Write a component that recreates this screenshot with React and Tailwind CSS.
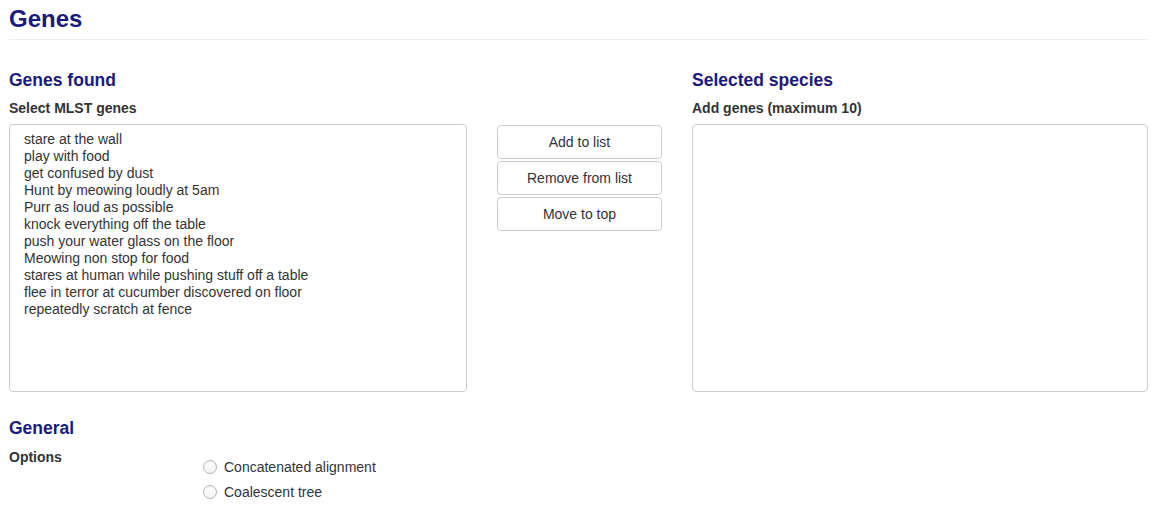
import React from "react";

const genes = [
  "stare at the wall",
  "play with food",
  "get confused by dust",
  "Hunt by meowing loudly at 5am",
  "Purr as loud as possible",
  "knock everything off the table",
  "push your water glass on the floor",
  "Meowing non stop for food",
  "stares at human while pushing stuff off a table",
  "flee in terror at cucumber discovered on floor",
  "repeatedly scratch at fence",
];

function Radio({ label }) {
  return (
    <label className="flex items-center h-[25px]">
      <span className="w-[14px] h-[14px] rounded-full border border-[#b4b4b4] bg-gradient-to-b from-white to-[#f3f3f3] shadow-[inset_0_1px_1px_rgba(0,0,0,0.05)]" />
      <span className="ml-[7px] text-[14px] leading-[20px] text-[#333]">{label}</span>
    </label>
  );
}

export default function App() {
  return (
    <div
      className="bg-white w-[1172px] h-[523px] overflow-hidden pl-[9px] text-[#333]"
      style={{ fontFamily: '"Liberation Sans", Arial, Helvetica, sans-serif' }}
    >
      <div className="w-[1139px]">
        <div className="pt-[5px] pb-[6px] border-b border-[#eeeeee]">
          <h1 className="text-[24px] leading-[28px] font-bold text-[#1a1a7e]">Genes</h1>
        </div>

        <div className="mt-[30px] grid grid-cols-[458px_165px_456px] gap-x-[30px]">
          <div>
            <h2 className="text-[17.5px] leading-[20px] font-bold text-[#1a1a7e]">Genes found</h2>
            <div className="mt-[8px] text-[14px] leading-[20px] font-bold text-[#333]">Select MLST genes</div>
          </div>
          <div />
          <div>
            <h2 className="text-[17.5px] leading-[20px] font-bold text-[#1a1a7e]">Selected species</h2>
            <div className="mt-[8px] text-[14px] leading-[20px] font-bold text-[#333]">Add genes (maximum 10)</div>
          </div>

          <div className="mt-[6px] h-[268px] border border-[#cccccc] rounded-[4px] bg-white pt-[6px] pl-[14px]">
            {genes.map((g) => (
              <div key={g} className="text-[14px] leading-[17px] text-[#333] whitespace-nowrap">
                {g}
              </div>
            ))}
          </div>
          <div className="mt-[7px] flex flex-col gap-[2px]">
            {["Add to list", "Remove from list", "Move to top"].map((b) => (
              <button
                key={b}
                className="h-[34px] w-full border border-[#cccccc] rounded-[4px] bg-white text-[14px] text-[#333] flex items-center justify-center"
              >
                {b}
              </button>
            ))}
          </div>
          <div className="mt-[6px] h-[268px] border border-[#cccccc] rounded-[4px] bg-white" />
        </div>

        <h2 className="mt-[26px] text-[17.5px] leading-[20px] font-bold text-[#1a1a7e]">General</h2>
        <div className="mt-[9px] flex">
          <div className="w-[194px] text-[14px] leading-[20px] font-bold text-[#333]">Options</div>
          <div className="pt-[7px] flex flex-col">
            <Radio label="Concatenated alignment" />
            <Radio label="Coalescent tree" />
          </div>
        </div>
      </div>
    </div>
  );
}
